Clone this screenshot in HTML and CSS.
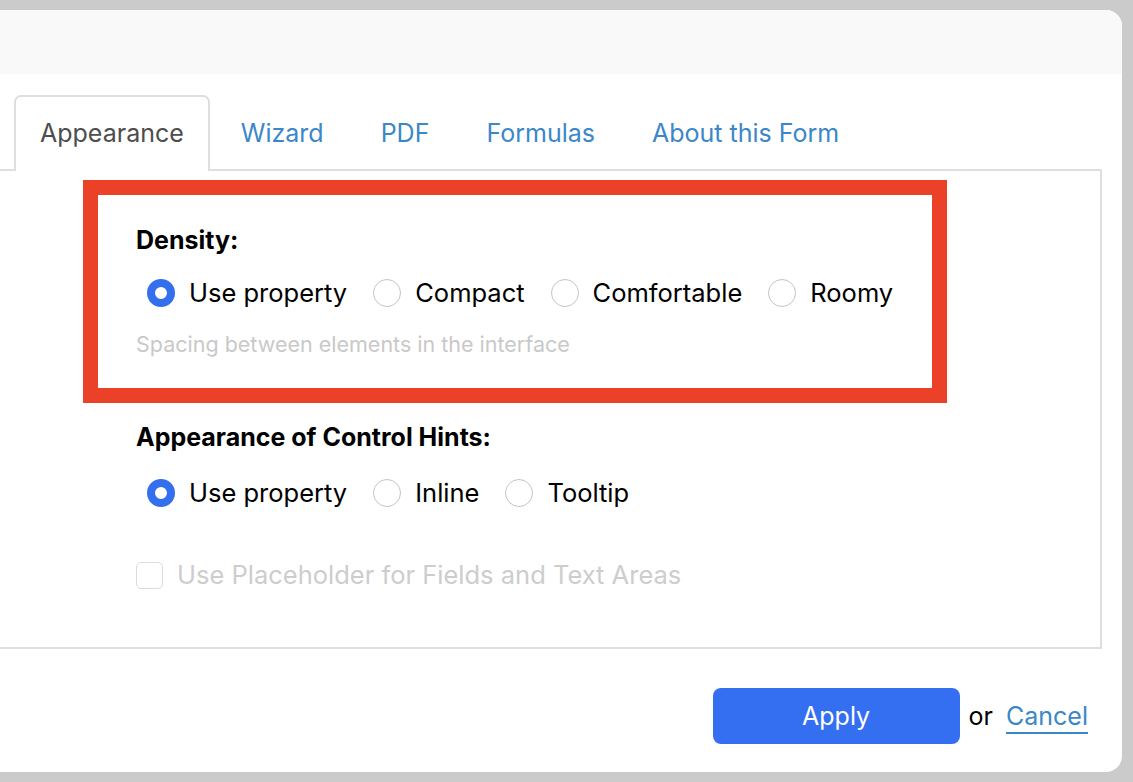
FILE: index.html
```html
<!DOCTYPE html>
<html lang="en">
<head>
<meta charset="utf-8">
<title>Form Settings</title>
<link rel="stylesheet" href="styles.css">
</head>
<body>
<div class="dialog">
  <div class="dialog-header"></div>
  <div class="dialog-body">
    <div class="tabs">
      <div class="tab active">Appearance</div>
      <div class="tab">Wizard</div>
      <div class="tab">PDF</div>
      <div class="tab">Formulas</div>
      <div class="tab">About this Form</div>
    </div>
    <div class="panel">
      <div class="section highlighted">
        <div class="section-title">Density:</div>
        <div class="radio-row">
          <label class="option"><span class="radio checked"></span><span class="option-label">Use property</span></label>
          <label class="option"><span class="radio"></span><span class="option-label">Compact</span></label>
          <label class="option"><span class="radio"></span><span class="option-label">Comfortable</span></label>
          <label class="option"><span class="radio"></span><span class="option-label">Roomy</span></label>
        </div>
        <div class="hint">Spacing between elements in the interface</div>
      </div>
      <div class="section plain">
        <div class="section-title">Appearance of Control Hints:</div>
        <div class="radio-row">
          <label class="option"><span class="radio checked"></span><span class="option-label">Use property</span></label>
          <label class="option"><span class="radio"></span><span class="option-label">Inline</span></label>
          <label class="option"><span class="radio"></span><span class="option-label">Tooltip</span></label>
        </div>
      </div>
      <div class="section checkbox-section">
        <label class="check-option"><span class="checkbox"></span><span class="check-label">Use Placeholder for Fields and Text Areas</span></label>
      </div>
    </div>
    <div class="actions">
      <button class="apply">Apply</button>
      <span class="or">or</span>
      <a class="cancel" href="#">Cancel</a>
    </div>
  </div>
</div>
</body>
</html>
```
FILE: styles.css
```css
* { box-sizing: border-box; }
html, body { margin: 0; padding: 0; }
body {
  background: #cbcbcb;
  font-family: Inter, "Noto Sans", "Liberation Sans", sans-serif;
  width: 1133px;
  height: 782px;
  overflow: hidden;
}
.dialog {
  margin-top: 10px;
  width: 1122px;
  height: 762px;
  background: #ffffff;
  border-radius: 0 16px 16px 0;
  overflow: hidden;
}
.dialog-header {
  height: 64px;
  background: #f9f9f9;
}
.dialog-body {
  padding-top: 21px;
}
.tabs {
  display: flex;
  gap: 5px;
  padding-left: 14px;
  height: 74px;
  position: relative;
  z-index: 1;
}
.tab {
  height: 76px;
  padding: 0 24px;
  border: 2px solid transparent;
  border-bottom: none;
  border-radius: 7px 7px 0 0;
  font-size: 25px;
  line-height: 72px;
  color: #3b87c8;
}
.tab.active {
  border-color: #dedede;
  background: #ffffff;
  color: #4d4d4d;
}
.panel {
  margin-left: -2px;
  margin-right: 20px;
  height: 480px;
  border: 2px solid #dedede;
  padding-top: 9px;
}
.section-title {
  font-weight: 700;
  font-size: 25px;
  line-height: 28px;
  color: #000;
}
.highlighted {
  margin-left: 83px;
  width: 864px;
  height: 223px;
  border: 15px solid #ea4128;
  padding: 31px 0 0 38px;
}
.radio-row {
  display: flex;
  gap: 26px;
  margin-top: 24px;
  padding-left: 11px;
}
.option {
  display: flex;
  align-items: center;
  gap: 14px;
  height: 30px;
}
.radio {
  width: 28px;
  height: 28px;
  border-radius: 50%;
  border: 1.7px solid #c4c4c4;
  background: #fff;
  flex: none;
}
.radio.checked {
  border: 8px solid #3470ee;
}
.option-label {
  font-size: 25.5px;
  color: #000;
  line-height: 30px;
}
.hint {
  margin-top: 23px;
  font-size: 21.5px;
  color: #c9c9c9;
  line-height: 26px;
}
.plain {
  margin-left: 136px;
  margin-top: 20px;
}
.plain .radio-row {
  margin-top: 27px;
}
.checkbox-section {
  margin-left: 136px;
  margin-top: 52px;
}
.check-option {
  display: flex;
  align-items: center;
  gap: 14px;
}
.checkbox {
  width: 27px;
  height: 27px;
  border: 1.7px solid #dcdcdc;
  border-radius: 5px;
  flex: none;
}
.check-label {
  font-size: 25.5px;
  color: #cdcdcd;
  line-height: 30px;
}
.actions {
  display: flex;
  justify-content: flex-end;
  align-items: center;
  padding-right: 34px;
  margin-top: 39px;
}
.apply {
  width: 247px;
  height: 56px;
  background: #346ff1;
  border: none;
  border-radius: 8px;
  color: #fff;
  font-family: inherit;
  font-size: 25px;
}
.or {
  margin-left: 9px;
  font-size: 25px;
  color: #000;
}
.cancel {
  margin-left: 13px;
  font-size: 25px;
  color: #3b87c8;
  text-decoration: underline;
  text-decoration-thickness: 1.5px;
  text-underline-offset: 7px;
}
```
